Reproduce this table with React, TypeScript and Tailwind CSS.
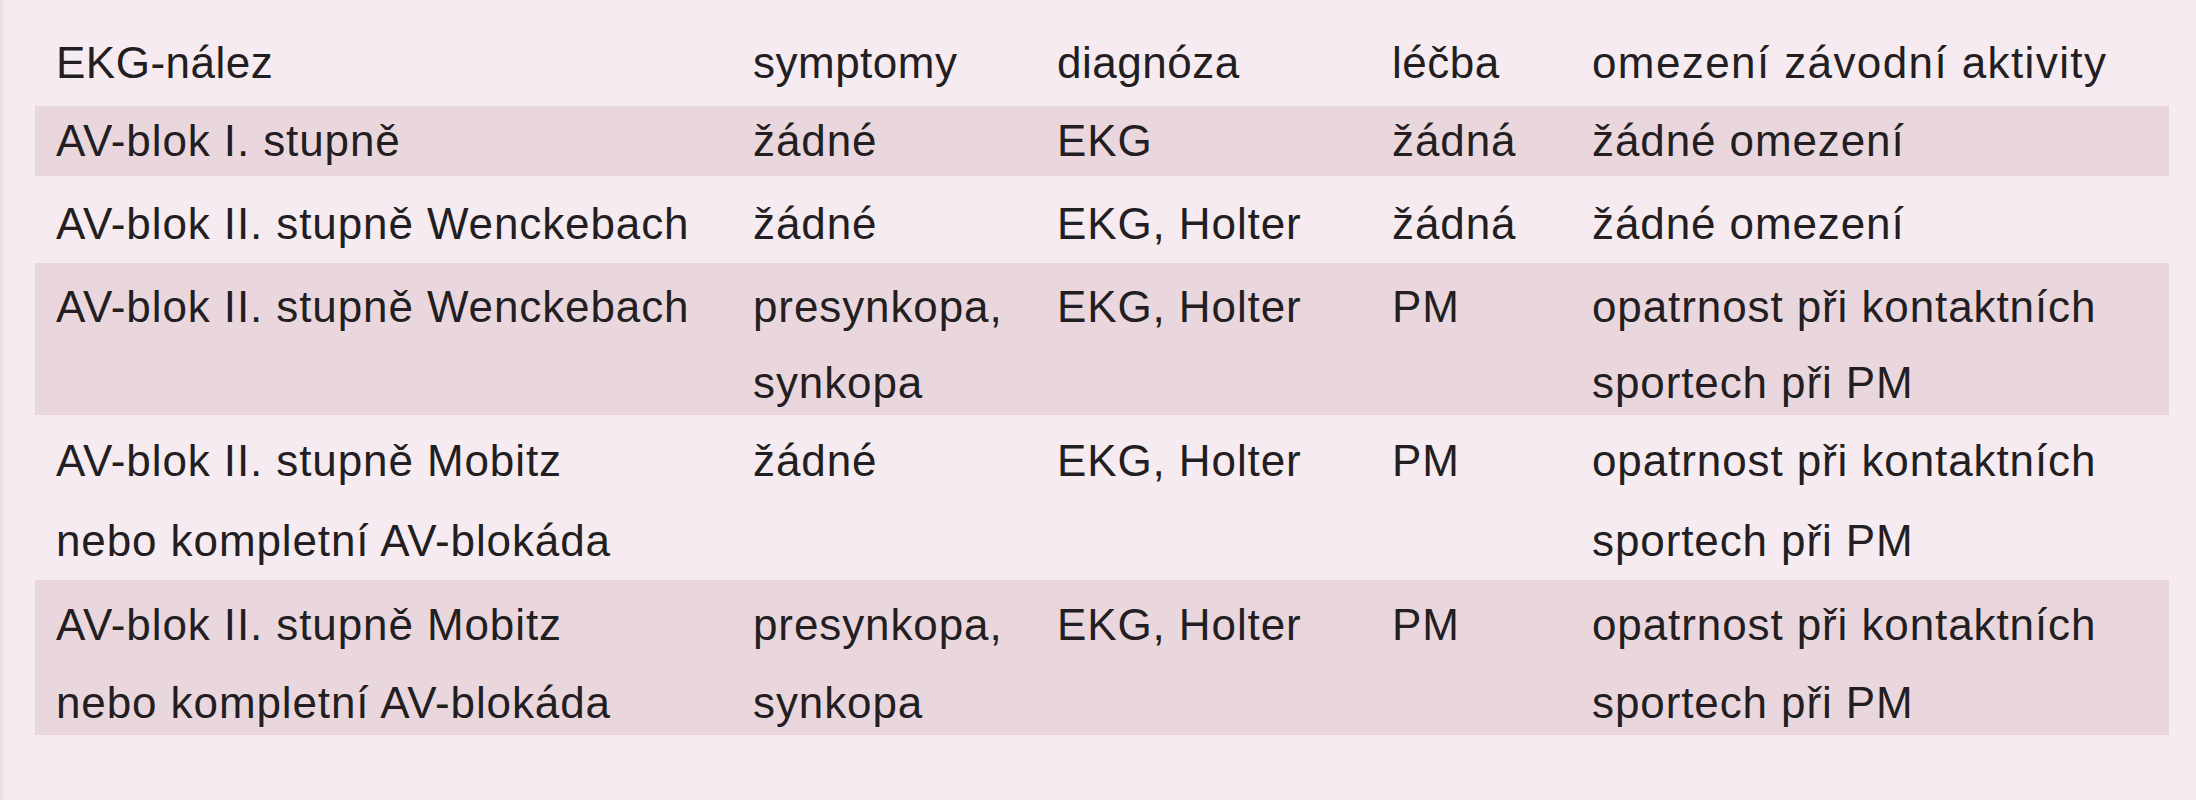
const cols = "grid grid-cols-[697px_304px_335px_200px_1fr] pl-[21px]";

type Row = {
  cells: string[][];
  band: boolean;
  box: string;
};

const rows: Row[] = [
  {
    band: true,
    box: "h-[70px] pt-[2px] leading-[66px]",
    cells: [["AV-blok I. stupně"], ["žádné"], ["EKG"], ["žádná"], ["žádné omezení"]],
  },
  {
    band: false,
    box: "h-[87px] pt-[10px] leading-[76px]",
    cells: [["AV-blok II. stupně Wenckebach"], ["žádné"], ["EKG, Holter"], ["žádná"], ["žádné omezení"]],
  },
  {
    band: true,
    box: "h-[152px] pt-[6px] leading-[76px]",
    cells: [
      ["AV-blok II. stupně Wenckebach"],
      ["presynkopa,", "synkopa"],
      ["EKG, Holter"],
      ["PM"],
      ["opatrnost při kontaktních", "sportech při PM"],
    ],
  },
  {
    band: false,
    box: "h-[165px] pt-[6px] leading-[80px]",
    cells: [
      ["AV-blok II. stupně Mobitz", "nebo kompletní AV-blokáda"],
      ["žádné"],
      ["EKG, Holter"],
      ["PM"],
      ["opatrnost při kontaktních", "sportech při PM"],
    ],
  },
  {
    band: true,
    box: "h-[155px] pt-[6px] leading-[78px]",
    cells: [
      ["AV-blok II. stupně Mobitz", "nebo kompletní AV-blokáda"],
      ["presynkopa,", "synkopa"],
      ["EKG, Holter"],
      ["PM"],
      ["opatrnost při kontaktních", "sportech při PM"],
    ],
  },
];

export default function App() {
  return (
    <div className="w-[2196px] h-[800px] overflow-hidden bg-[#f6ebf0] border-l-[3px] border-[#e6e1e3] font-['Liberation_Sans',Arial,sans-serif] text-[44px] tracking-[0.9px] text-[#231e21]">
      <div className="ml-[32px] w-[2134px]">
        {/* header */}
        <div className={`${cols} h-[106px] pt-[25px] leading-[76px] tracking-[0.5px]`}>
          <div className="whitespace-nowrap">EKG-nález</div>
          <div className="whitespace-nowrap">symptomy</div>
          <div className="whitespace-nowrap">diagnóza</div>
          <div className="whitespace-nowrap">léčba</div>
          <div className="whitespace-nowrap tracking-[1.4px]">omezení závodní aktivity</div>
        </div>

        {rows.map((row, i) => (
          <div key={i} className={`${cols} ${row.box} ${row.band ? "bg-[#ead7de]" : ""}`}>
            {row.cells.map((lines, j) => (
              <div key={j} className="whitespace-nowrap">
                {lines.map((l, k) => (
                  <div key={k}>{l}</div>
                ))}
              </div>
            ))}
          </div>
        ))}
      </div>
    </div>
  );
}
